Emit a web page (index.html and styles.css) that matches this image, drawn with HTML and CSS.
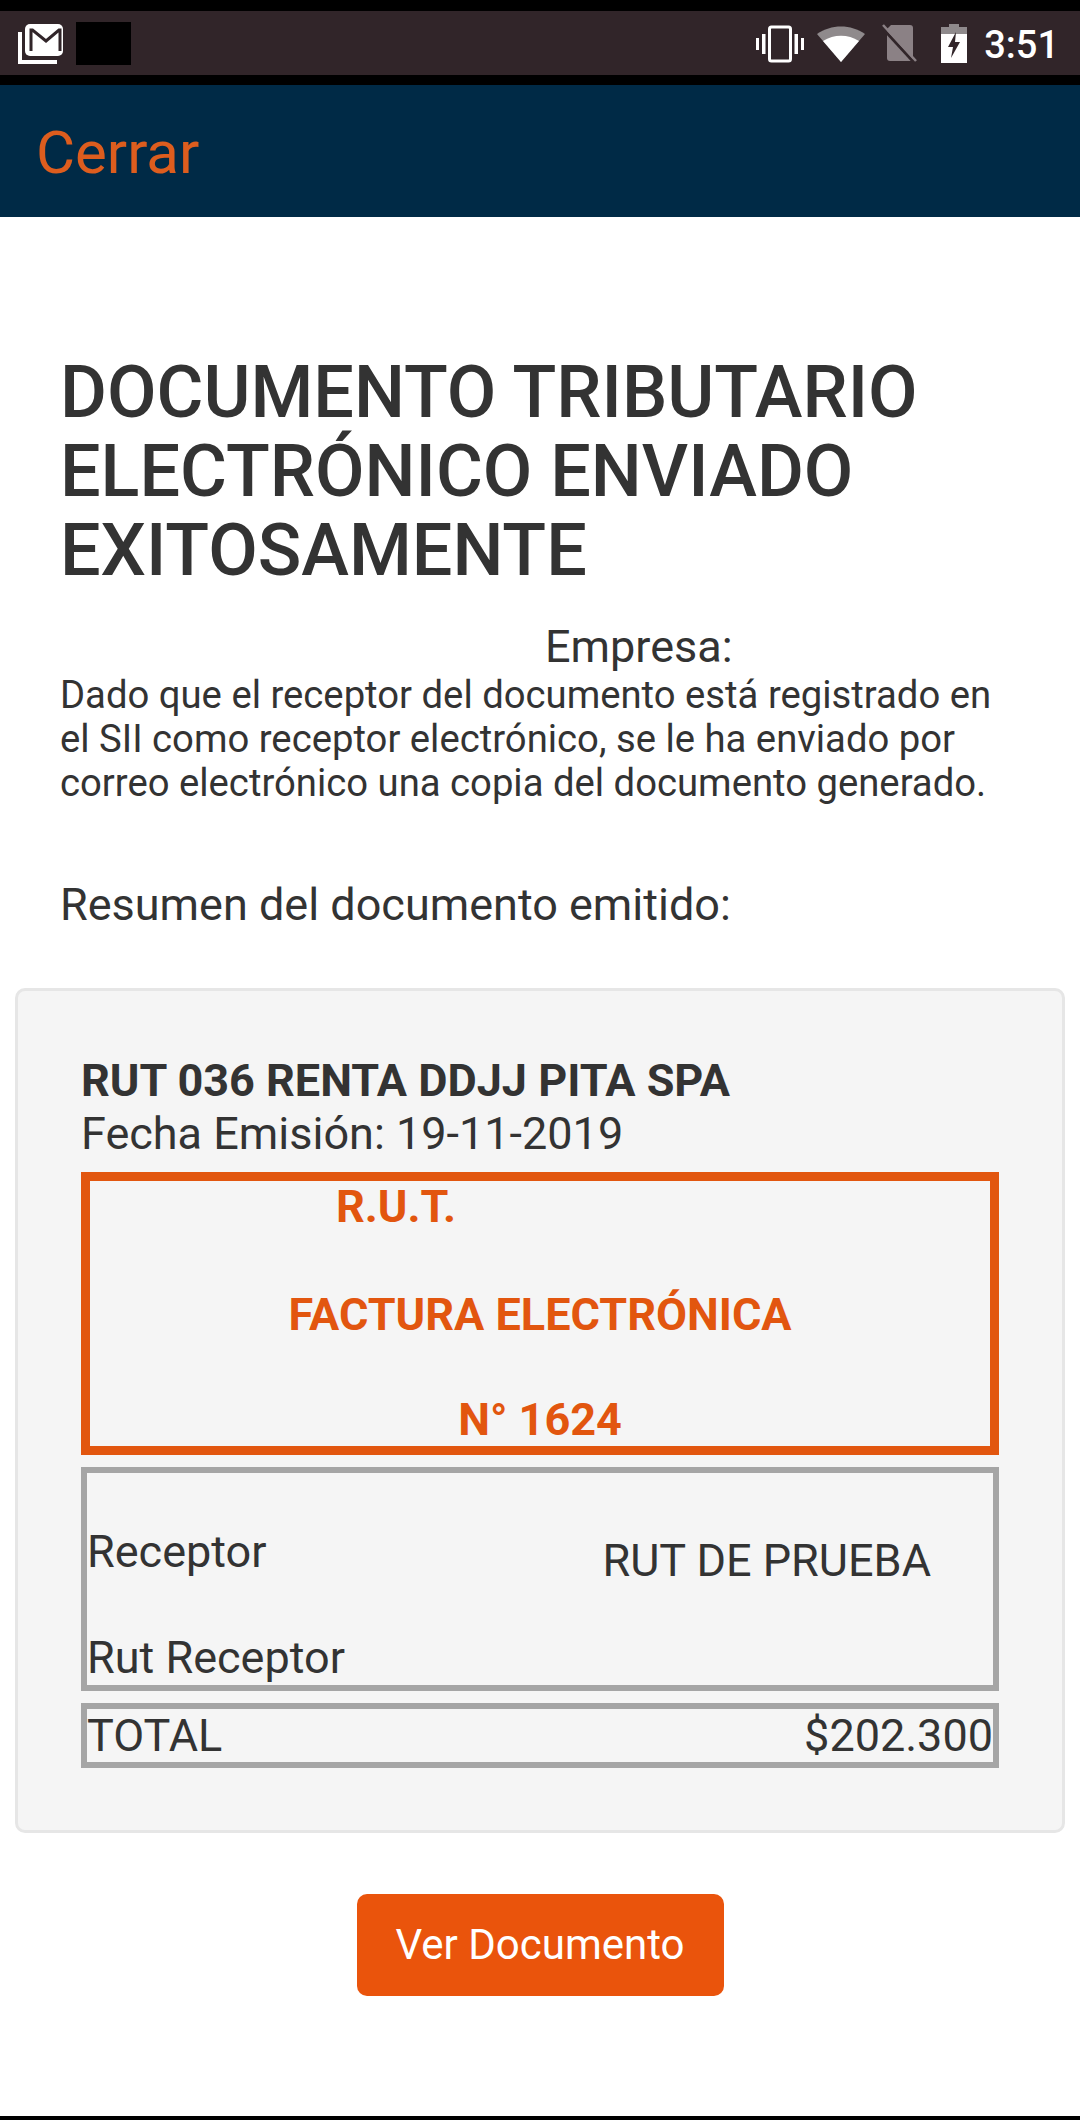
FILE: index.html
```html
<!DOCTYPE html>
<html lang="es">
<head>
    <meta charset="UTF-8">
    <meta name="viewport" content="width=device-width, initial-scale=1.0">
    <title>Documento enviado</title>
    <link rel="stylesheet" href="styles.css">
</head>
<body>
    <div class="statusbar">
        <div class="status-left">
            <svg class="icon-mail" width="46" height="40" viewBox="0 0 46 40">
                <path d="M2 8v30h37" fill="none" stroke="#fff" stroke-width="4"/>
                <rect x="7" y="0" width="38" height="32" rx="5" fill="#fff"/>
                <path d="M13 27V6h1.500L28 17 41 6h1v21" fill="none" stroke="#312529" stroke-width="3"/>
            </svg>
            <div class="blackout"></div>
        </div>
        <div class="status-right">
            <svg class="icon-vib" width="50" height="38" viewBox="0 0 50 38">
                <rect x="14.500" y="2" width="21" height="34" rx="2" fill="none" stroke="#fff" stroke-width="3"/>
                <path d="M1 13h3v12H1zM7 9h3.500v20H7zM39.500 9H43v20h-3.500zM46 13h3v12h-3z" fill="#fff"/>
            </svg>
            <svg class="icon-wifi" width="48" height="38" viewBox="0 0 48 38">
                <path d="M24 37L0 9C14 -1 34 -1 48 9z" fill="#8f8a8c"/>
                <path d="M24 37L6 16C17 9 31 9 42 16z" fill="#fff"/>
            </svg>
            <svg class="icon-sim" width="36" height="40" viewBox="0 0 36 40">
                <path d="M9 1h19a3 3 0 0 1 3 3v30a3 3 0 0 1-3 3H8a3 3 0 0 1-3-3V5z" fill="#8b8185"/>
                <path d="M0 3.500l33 36" stroke="#312529" stroke-width="3"/>
                <path d="M1 1l33 36" stroke="#8b8185" stroke-width="2.500"/>
            </svg>
            <svg class="icon-batt" width="26" height="39" viewBox="0 0 26 39">
                <path d="M8 3V0h10v3h8v10H0V3z" fill="#8f8a8c"/>
                <path d="M0 10h26v29H0z" fill="#fff"/>
                <path d="M15 8L7 23h5l-2 11 9-16h-5z" fill="#312529"/>
            </svg>
            <span class="clock">3:51</span>
        </div>
    </div>

    <div class="navbar"><a class="close-link">Cerrar</a></div>

    <div class="content">
        <h1>DOCUMENTO TRIBUTARIO ELECTRÓNICO ENVIADO EXITOSAMENTE</h1>
        <div class="empresa">Empresa:</div>
        <p class="intro">Dado que el receptor del documento está registrado en el SII como receptor electrónico, se le ha enviado por correo electrónico una copia del documento generado.</p>
        <div class="summary-title">Resumen del documento emitido:</div>
    </div>

    <div class="card">
        <div class="company">RUT 036 RENTA DDJJ PITA SPA</div>
        <div class="date">Fecha Emisión: 19-11-2019</div>

        <div class="doc-box">
            <div class="doc-rut">R.U.T.</div>
            <div>FACTURA ELECTRÓNICA</div>
            <div>N° 1624</div>
        </div>

        <div class="receiver-box">
            <div class="receiver-labels">
                <div>Receptor</div>
                <div>Rut Receptor</div>
            </div>
            <div class="receiver-value">RUT DE PRUEBA</div>
        </div>

        <div class="total-box">
            <span>TOTAL</span>
            <span>$202.300</span>
        </div>
    </div>

    <div class="actions">
        <button class="btn-doc">Ver Documento</button>
    </div>

    <div class="bottom-line"></div>
</body>
</html>
```

FILE: styles.css
```css
html, body {
    height: 2120px;
}
body {
    display: flex;
    flex-direction: column;
    margin: 0;
    overflow: hidden;
    font-family: Roboto, "Liberation Sans", sans-serif;
    color: #333;
    background-color: #fff;
}
.statusbar {
    display: flex;
    flex: none;
    justify-content: space-between;
    align-items: center;
    box-sizing: border-box;
    height: 85px;
    padding: 1px 21px 0 18px;
    border-top: 11px solid #000;
    border-bottom: 10px solid #000;
    background-color: #312529;
}
.status-left, .status-right {
    display: flex;
    align-items: center;
}
.blackout {
    width: 55px;
    height: 43px;
    margin-left: 12px;
    background-color: #000;
}
.status-right svg {
    display: block;
}
.status-right .icon-vib {
    margin-right: 12px;
}
.status-right .icon-wifi {
    margin-right: 17px;
}
.status-right .icon-sim {
    margin-right: 23px;
}
.status-right .icon-batt {
    margin-right: 17px;
}
.clock {
    color: #fff;
    font-size: 38px;
    font-weight: 500;
    line-height: 46px;
    padding-top: 2px;
}
.navbar {
    display: flex;
    flex: none;
    align-items: center;
    box-sizing: border-box;
    height: 132px;
    padding: 2px 0 0 36px;
    background-color: #002a46;
}
.close-link {
    color: #dd5d1e;
    font-size: 60px;
}
.content {
    padding: 0 60px;
}
h1 {
    margin: 136px 0 0;
    font-size: 71.9px;
    font-weight: 500;
    line-height: 79px;
}
.empresa {
    margin-top: 31px;
    padding-left: 485px;
    font-size: 45px;
    line-height: 52px;
}
.intro {
    margin: 0;
    font-size: 38.25px;
    line-height: 44px;
}
.summary-title {
    margin-top: 73.8px;
    font-size: 45px;
    line-height: 52px;
}
.card {
    flex: none;
    box-sizing: border-box;
    height: 845px;
    margin: 57px 15px 0;
    padding: 64px 63px 0;
    border: 3px solid #e6e6e6;
    border-radius: 10px;
    background-color: #f5f5f5;
    font-size: 45px;
}
.company {
    font-weight: 700;
    line-height: 52px;
}
.date {
    line-height: 53px;
}
.doc-box {
    display: flex;
    flex-direction: column;
    gap: 53px;
    box-sizing: border-box;
    height: 283px;
    margin-top: 12px;
    border: 9px solid #e2560f;
    color: #e2560f;
    font-weight: 700;
    line-height: 52px;
    text-align: center;
}
.doc-rut {
    margin-bottom: 3px;
    padding-right: 288px;
}
.receiver-box {
    display: flex;
    justify-content: space-between;
    box-sizing: border-box;
    height: 224px;
    margin-top: 12px;
    border: 6px solid #a5a5a5;
    padding: 0 62px 0 0;
}
.receiver-labels {
    display: flex;
    flex-direction: column;
    gap: 54px;
    padding-top: 53px;
    line-height: 52px;
}
.receiver-value {
    margin-top: 62px;
    line-height: 52px;
}
.total-box {
    display: flex;
    justify-content: space-between;
    align-items: center;
    box-sizing: border-box;
    height: 65px;
    margin-top: 12px;
    border: 6px solid #a5a5a5;
}
.actions {
    display: flex;
    justify-content: center;
    margin-top: 61px;
}
.btn-doc {
    width: 367px;
    height: 102px;
    padding: 0;
    border: none;
    border-radius: 10px;
    background-color: #ea540c;
    color: #fff;
    font-family: inherit;
    font-size: 42px;
}
.bottom-line {
    flex: none;
    height: 4px;
    margin-top: auto;
    background-color: #000;
}
```
